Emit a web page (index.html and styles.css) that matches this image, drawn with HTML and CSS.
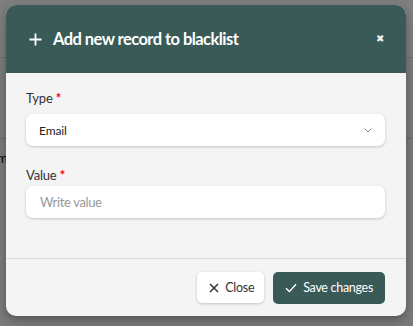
FILE: index.html
```html
<!DOCTYPE html>
<html lang="en">
<head>
  <meta charset="UTF-8">
  <meta name="viewport" content="width=device-width, initial-scale=1.0">
  <title>Blacklist</title>
  <link rel="stylesheet" href="styles.css">
</head>
<body>
  <!-- page behind the overlay -->
  <div class="page">
    <div class="page-top"></div>
    <div class="page-row"></div>
    <div class="page-text">m</div>
  </div>
  <div class="overlay"></div>

  <div class="modal">
    <div class="modal-header">
      <svg class="plus" width="13" height="13" viewBox="0 0 13 13">
        <path d="M6.5 0.5v12M0.5 6.5h12" stroke="#fff" stroke-width="1.8" fill="none"/>
      </svg>
      <h2>Add new record to blacklist</h2>
      <span class="close-x">&#x2716;</span>
    </div>

    <div class="modal-body">
      <label class="field-label">Type <span class="req">*</span></label>
      <div class="select">
        <span>Email</span>
        <svg width="8" height="5" viewBox="0 0 8 5">
          <path d="M0.5 0.5l3.5 3.5l3.5-3.5" stroke="#888" stroke-width="1" fill="none"/>
        </svg>
      </div>

      <label class="field-label second">Value <span class="req">*</span></label>
      <input class="text-input" type="text" placeholder="Write value">
    </div>

    <div class="modal-footer">
      <button class="btn btn-light">
        <svg width="10" height="10" viewBox="0 0 10 10">
          <path d="M1 1l8 8M9 1l-8 8" stroke="#333" stroke-width="1.5" fill="none"/>
        </svg>
        Close
      </button>
      <button class="btn btn-primary">
        <svg width="12" height="10" viewBox="0 0 12 10">
          <path d="M1 5.2l3.4 3.4l6.6-7.4" stroke="#fff" stroke-width="1.4" fill="none"/>
        </svg>
        Save changes
      </button>
    </div>
  </div>
</body>
</html>
```

FILE: styles.css
```css
body {
  margin: 0;
  height: 326px;
  overflow: hidden;
  font-family: 'Lato', 'Liberation Sans', sans-serif;
  background: #f4f4f4;
  position: relative;
}

.page {
  position: absolute;
  inset: 0;
}

.page-top {
  height: 57px;
  background: #fdfdfd;
  border-bottom: 1px solid #d8d8d8;
}

.page-row {
  height: 80px;
  border-bottom: 1px solid #d0d0d0;
}

.page-text {
  margin-top: 11px;
  margin-left: -3px;
  font-size: 13px;
  color: #000;
}

.overlay {
  position: absolute;
  inset: 0;
  background: rgba(0, 0, 0, 0.5);
}

.modal {
  position: absolute;
  top: 5px;
  left: 6px;
  width: 400px;
  background: #f4f4f4;
  border-radius: 10px;
  box-shadow: 0 4px 10px rgba(0, 0, 0, 0.3);
  overflow: hidden;
}

.modal-header {
  height: 68px;
  background: #3a5a57;
  display: flex;
  align-items: center;
  padding: 0 22px 0 23px;
  color: #fff;
}

.plus {
  margin-top: 1px;
}

.modal-header h2 {
  flex: 1;
  margin: 0 0 0 11px;
  font-size: 16.5px;
  font-weight: 700;
  letter-spacing: -0.55px;
}

.close-x {
  font-size: 10px;
  margin-top: -2px;
  color: #eef2f1;
}

.modal-body {
  padding: 17px 20px 40px 20px;
  border-bottom: 1px solid #dcdcdc;
}

.field-label {
  display: block;
  font-size: 13px;
  letter-spacing: -0.2px;
  color: #333;
  line-height: 17px;
  margin-bottom: 7px;
}

.field-label.second {
  margin-top: 21px;
  margin-bottom: 2px;
}

.req {
  color: #e00;
  font-weight: 700;
}

.select, .text-input {
  box-sizing: border-box;
  width: 359px;
  height: 32px;
  background: #fff;
  border: none;
  border-radius: 7px;
  box-shadow: 0 1px 3px rgba(0, 0, 0, 0.2);
  font-family: inherit;
}

.select {
  display: flex;
  align-items: center;
  justify-content: space-between;
  padding: 0 13px 0 13px;
  font-size: 12px;
  letter-spacing: -0.1px;
  color: #222;
}

.text-input {
  display: block;
  padding: 0 14px;
  font-size: 13px;
  letter-spacing: -0.35px;
  outline: none;
}

.text-input::placeholder {
  color: #999;
}

.modal-footer {
  height: 57px;
  display: flex;
  align-items: center;
  justify-content: flex-end;
  gap: 9px;
  padding: 0 21px;
}

.btn {
  height: 31px;
  display: flex;
  align-items: center;
  gap: 6px;
  border: none;
  border-radius: 5px;
  font-family: inherit;
  font-size: 12.5px;
  letter-spacing: -0.3px;
  cursor: pointer;
}

.btn-light {
  background: #fff;
  color: #333;
  padding: 0 10px 0 12px;
  box-shadow: 0 1px 3px rgba(0, 0, 0, 0.2);
}

.btn-primary {
  background: #3a5a57;
  color: #fff;
  padding: 0 12px 0 12px;
  height: 32px;
}
```
